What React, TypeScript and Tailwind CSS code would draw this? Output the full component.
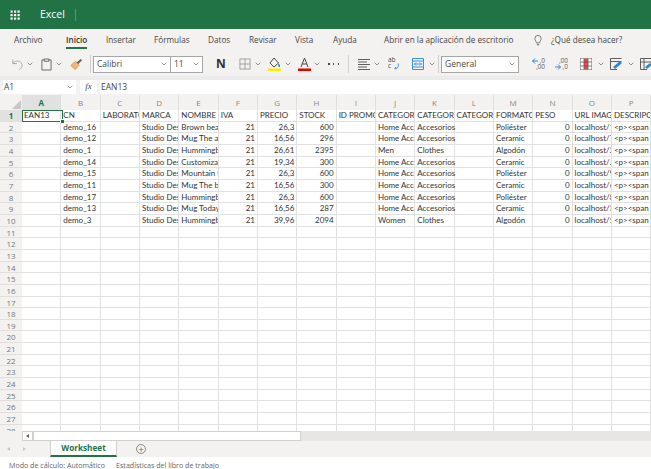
import React from "react";
import { ChevronDown } from "lucide-react";

const columns = ["A", "B", "C", "D", "E", "F", "G", "H", "I", "J", "K", "L", "M", "N", "O", "P"];

const header = ["EAN13", "CN", "LABORATORIO", "MARCA", "NOMBRE DEL", "IVA", "PRECIO", "STOCK", "ID PROMOCION", "CATEGORIA 1", "CATEGORIA 2", "CATEGORIA 3", "FORMATO", "PESO", "URL IMAGEN", "DESCRIPCION"];

type Item = { cn: string; name: string; price: string; stock: string; cat: string; sub: string; format: string; url: string };

const items: Item[] = [
  { cn: "demo_16", name: "Brown bear", price: "26,3", stock: "600", cat: "Home Accents", sub: "Accesorios", format: "Poliéster", url: "localhost/1" },
  { cn: "demo_12", name: "Mug The adventure", price: "16,56", stock: "296", cat: "Home Accents", sub: "Accesorios", format: "Ceramic", url: "localhost/7" },
  { cn: "demo_1", name: "Hummingbird", price: "26,61", stock: "2395", cat: "Men", sub: "Clothes", format: "Algodón", url: "localhost/2" },
  { cn: "demo_14", name: "Customizable", price: "19,34", stock: "300", cat: "Home Accents", sub: "Accesorios", format: "Ceramic", url: "localhost/." },
  { cn: "demo_15", name: "Mountain fox", price: "26,3", stock: "600", cat: "Home Accents", sub: "Accesorios", format: "Poliéster", url: "localhost/9" },
  { cn: "demo_11", name: "Mug The best", price: "16,56", stock: "300", cat: "Home Accents", sub: "Accesorios", format: "Ceramic", url: "localhost/6" },
  { cn: "demo_17", name: "Hummingbird", price: "26,3", stock: "600", cat: "Home Accents", sub: "Accesorios", format: "Poliéster", url: "localhost/8" },
  { cn: "demo_13", name: "Mug Today is", price: "16,56", stock: "287", cat: "Home Accents", sub: "Accesorios", format: "Ceramic", url: "localhost/3" },
  { cn: "demo_3", name: "Hummingbird", price: "39,96", stock: "2094", cat: "Women", sub: "Clothes", format: "Algodón", url: "localhost/5" },
];

const tabs = [
  { label: "Archivo", className: "ml-[14px] w-[28px]" },
  { label: "Inicio", className: "ml-[24px] w-[21px]", active: true },
  { label: "Insertar", className: "ml-[19px] w-[28px]" },
  { label: "Fórmulas", className: "ml-[20px] w-[35px]" },
  { label: "Datos", className: "ml-[19px] w-[22px]" },
  { label: "Revisar", className: "ml-[19px] w-[27px]" },
  { label: "Vista", className: "ml-[19px] w-[18px]" },
  { label: "Ayuda", className: "ml-[20px] w-[24px]" },
  { label: "Abrir en la aplicación de escritorio", className: "ml-[27px] w-[129px]" },
];

const Chevron = ({ className = "" }: { className?: string }) => (
  <ChevronDown className={`w-[8px] h-[8px] shrink-0 text-[#605e5c] ${className}`} strokeWidth={2} />
);

const Divider = ({ className = "" }: { className?: string }) => (
  <div className={`w-px h-[18px] bg-[#d2d0ce] shrink-0 ${className}`} />
);

const Cell = ({ children, right, spill }: { children?: React.ReactNode; right?: boolean; spill?: boolean }) => (
  <div
    className={`w-[39.33px] shrink-0 h-full border-r border-b border-[#e1e1e1] px-[2px] leading-[11.5px] whitespace-nowrap font-['Lato',sans-serif] text-[8px] text-[#333] ${
      right ? "text-right" : ""
    } ${spill ? "overflow-visible relative z-10" : "overflow-hidden"}`}
  >
    {children}
  </div>
);

const RowLabel = ({ n, active }: { n: number; active?: boolean }) => (
  <div
    className={`w-[22px] shrink-0 h-full text-center text-[8px] leading-[11px] border-b border-[#e1dfdd] ${
      active ? "bg-[#e1e1e1] text-[#217346] font-bold" : "bg-[#f3f2f1] text-[#777]"
    }`}
  >
    {n}
  </div>
);

export default function App() {
  return (
    <div className="w-[651px] h-[469px] overflow-hidden flex flex-col bg-white font-['Open_Sans',sans-serif]">
      {/* title bar */}
      <div className="h-[29px] shrink-0 bg-[#217346] flex items-center text-white">
        <svg viewBox="0 0 10 10" className="w-[10px] h-[10px] ml-[10px]" fill="white">
          {[0.5, 4, 7.5].map((y) =>
            [0.5, 4, 7.5].map((x) => <rect key={`${x}-${y}`} x={x} y={y} width="2.2" height="2.2" />)
          )}
        </svg>
        <span className="ml-[20px] text-[10.5px]">Excel</span>
        <div className="ml-[10px] w-px h-[12px] bg-[#4f9a70]" />
      </div>

      {/* ribbon tabs */}
      <div className="h-[23px] shrink-0 bg-[#f3f2f1] flex items-center text-[8.2px] text-[#484644] whitespace-nowrap">
        {tabs.map((tab) => (
          <div key={tab.label} className={`relative ${tab.className} ${tab.active ? "font-semibold text-[#323130]" : ""}`}>
            {tab.label}
            {tab.active && <div className="absolute left-0 right-0 top-[13px] h-[2px] bg-[#217346]" />}
          </div>
        ))}
        <svg viewBox="0 0 10 14" className="w-[8px] h-[11px] ml-[21px]" fill="none" stroke="#605e5c" strokeWidth="1">
          <path d="M3 10 C3 8 1 7 1 4.5 A4 4 0 0 1 9 4.5 C9 7 7 8 7 10 Z M3.5 12 H6.5 M4.5 13.5 H5.5" />
        </svg>
        <span className="ml-[9px]">¿Qué desea hacer?</span>
      </div>

      {/* toolbar */}
      <div className="h-[24px] shrink-0 bg-[#f3f2f1] flex items-center whitespace-nowrap [&>*]:shrink-0">
        <svg viewBox="0 0 14 14" className="w-[13px] h-[13px] ml-[11px]" fill="none" stroke="#a6a6a6" strokeWidth="1">
          <path d="M2 1.5 V6 H6.5 M2 6 C4 3 8 2.5 10.5 4.5 C13 7 12 11 9 12.5" />
        </svg>
        <Chevron className="ml-[2px]" />
        <svg viewBox="0 0 12 14" className="w-[11px] h-[13px] ml-[7px]" fill="none" stroke="#605e5c" strokeWidth="1">
          <path d="M3.5 2 H1 V13 H11 V2 H8.5 M3.5 1 H8.5 V3.5 H3.5 Z" />
        </svg>
        <Chevron className="ml-[3px]" />
        <svg viewBox="0 0 14 14" className="w-[13px] h-[13px] ml-[7px]">
          <path d="M1 8 L6 3.5 L10 7.5 L5.5 12.5 Z" fill="#f2b67d" stroke="#d9822b" strokeWidth="0.8" />
          <path d="M7 5 L11.5 1 L13 2.5 L9 6.5 Z" fill="#605e5c" />
        </svg>
        <Divider className="ml-[7px]" />
        <div className="ml-[2px] w-[110px] h-[17px] flex border border-[#a6a6a6] bg-white text-[8.5px] text-[#484644]">
          <div className="w-[77px] flex items-center justify-between pl-[3px] pr-[2px] border-r border-[#a6a6a6]">
            Calibri
            <Chevron />
          </div>
          <div className="flex-1 flex items-center justify-between pl-[3px] pr-[2px]">
            11
            <Chevron />
          </div>
        </div>
        <span className="ml-[13px] w-[10px] text-[12px] font-bold text-[#323130] leading-none">N</span>
        <svg viewBox="0 0 13 13" className="w-[12px] h-[12px] ml-[13px]" fill="none" stroke="#8a8886" strokeWidth="0.8">
          <path d="M1 1 H12 V12 H1 Z M6.5 1 V12 M1 6.5 H12" />
        </svg>
        <Chevron className="ml-[3px]" />
        <svg viewBox="0 0 13 14" className="w-[13px] h-[14px] ml-[6px]">
          <path d="M6 1 L10.5 6 L6 10 L2 6 Z" fill="none" stroke="#484644" strokeWidth="1" />
          <path d="M10 6 L12 8 V10 H10.5 Z" fill="#2b88d8" />
          <rect x="0" y="11.5" width="13" height="2.5" fill="#ffeb00" />
        </svg>
        <Chevron className="ml-[3px]" />
        <svg viewBox="0 0 13 14" className="w-[13px] h-[14px] ml-[6px]">
          <path d="M3 10 L6.5 1 L10 10 M4.2 7 H8.8" fill="none" stroke="#484644" strokeWidth="1" />
          <rect x="0" y="11.5" width="13" height="2.5" fill="#e60000" />
        </svg>
        <Chevron className="ml-[2px]" />
        <div className="ml-[7px] w-[11px] flex justify-between">
          <div className="w-[1.5px] h-[1.5px] bg-[#484644]" />
          <div className="w-[1.5px] h-[1.5px] bg-[#484644]" />
          <div className="w-[1.5px] h-[1.5px] bg-[#484644]" />
        </div>
        <Divider className="ml-[9px]" />
        <svg viewBox="0 0 12 12" className="w-[12px] h-[12px] ml-[9px]" fill="none" stroke="#605e5c" strokeWidth="1">
          <path d="M0 1.5 H12 M0 4 H9 M0 6.5 H12 M0 9 H9 M0 11.5 H12" />
        </svg>
        <Chevron className="ml-[3px]" />
        <div className="ml-[7px] w-[12px] h-[14px] relative text-[6.5px] leading-[5.5px] text-[#484644]">
          ab
          <br />c
          <svg viewBox="0 0 8 8" className="absolute right-0 bottom-[1px] w-[7px] h-[7px]" fill="none" stroke="#2b88d8" strokeWidth="1">
            <path d="M6 0.5 V4 C6 6 4 6 2 6 M3.5 4.5 L2 6 L3.5 7.5" />
          </svg>
        </div>
        <svg viewBox="0 0 12 12" className="w-[12px] h-[12px] ml-[12px]" fill="none" stroke="#2b88d8" strokeWidth="0.9">
          <path d="M0.5 0.5 H11.5 V11.5 H0.5 Z M0.5 3 H11.5 M0.5 9 H11.5 M2.5 6 H9.5 M4 4.5 L2.5 6 L4 7.5 M8 4.5 L9.5 6 L8 7.5" />
        </svg>
        <Chevron className="ml-[4px]" />
        <Divider className="ml-[2px]" />
        <div className="ml-[2px] w-[78px] h-[17px] flex items-center justify-between pl-[3px] pr-[2px] border border-[#a6a6a6] bg-white text-[8.5px] text-[#484644]">
          General
          <Chevron />
        </div>
        <div className="ml-[13px] w-[13px] h-[12px] relative text-[6.5px] leading-[6px] text-[#605e5c] text-right">
          ,0
          <br />
          ,00
          <svg viewBox="0 0 6 6" className="absolute left-0 top-0 w-[6px] h-[6px]" fill="none" stroke="#2b88d8" strokeWidth="1">
            <path d="M6 3 H0.5 M3 0.5 L0.5 3 L3 5.5" />
          </svg>
        </div>
        <div className="ml-[10px] w-[13px] h-[12px] relative text-[6.5px] leading-[6px] text-[#605e5c] text-right">
          ,00
          <br />
          ,0
          <svg viewBox="0 0 6 6" className="absolute left-0 bottom-0 w-[6px] h-[6px]" fill="none" stroke="#2b88d8" strokeWidth="1">
            <path d="M0 3 H5.5 M3 0.5 L5.5 3 L3 5.5" />
          </svg>
        </div>
        <svg viewBox="0 0 12 12" className="w-[12px] h-[12px] ml-[12px]">
          <rect width="12" height="12" fill="#fff" stroke="#605e5c" />
          <rect x="4" y="0.5" width="4" height="11" fill="#e8474c" />
          <path d="M0.5 4 H11.5 M0.5 8 H11.5 M4 0.5 V11.5 M8 0.5 V11.5" stroke="#605e5c" strokeWidth="0.8" />
        </svg>
        <Chevron className="ml-[5px]" />
        <svg viewBox="0 0 12 12" className="w-[12px] h-[12px] ml-[5px]" fill="none">
          <path d="M0.5 0.5 H11.5 M0.5 0.5 V11.5 H7 M0.5 3.5 H11.5" stroke="#605e5c" strokeWidth="1" />
          <path d="M3 9 L10 3 L12 5 L5 11 Z" fill="#2b88d8" />
        </svg>
        <Chevron className="ml-[5px]" />
        <svg viewBox="0 0 12 12" className="w-[12px] h-[12px] ml-[5px]" fill="none">
          <path d="M0.5 0.5 H11.5 M0.5 0.5 V11.5 H7 M0.5 4 H11.5 M4 0.5 V11.5" stroke="#605e5c" strokeWidth="1" />
          <path d="M5 9 L10 5 L12 7 L7 11 Z" fill="#2b88d8" />
        </svg>
      </div>

      <div className="h-[4px] shrink-0 bg-[#ebebeb]" />

      {/* formula bar */}
      <div className="h-[15px] shrink-0 bg-[#f3f2f1] flex items-stretch pb-px text-[8.5px] text-[#484644]">
        <div className="ml-[3px] w-[73px] bg-white flex items-center justify-between pl-px pr-[2px]">
          A1
          <Chevron />
        </div>
        <div className="ml-[4px] w-[17px] bg-white flex items-center justify-center font-['Liberation_Serif',serif] italic text-[9px]">
          fx
        </div>
        <div className="ml-[3px] flex-1 bg-white flex items-center pl-px">EAN13</div>
      </div>

      {/* sheet */}
      <div className="flex-1 min-h-0 overflow-hidden relative">
        <div className="h-[15px] flex">
          <div className="w-[22px] shrink-0 bg-[#f3f2f1] flex items-end justify-end pr-px pb-px">
            <svg viewBox="0 0 9 9" className="w-[9px] h-[9px]">
              <path d="M9 0 V9 H0 Z" fill="#c8c6c4" />
            </svg>
          </div>
          {columns.map((col, i) => (
            <div
              key={col}
              className={`w-[39.33px] shrink-0 text-center text-[8px] leading-[15px] border-r border-[#e1dfdd] ${
                i === 0 ? "bg-[#e1e1e1] text-[#217346] font-bold" : "bg-[#f3f2f1] text-[#888]"
              }`}
            >
              {col}
            </div>
          ))}
        </div>
        <div className="h-[11.67px] flex">
          <RowLabel n={1} active />
          {header.map((h, i) => (
            <Cell key={i}>{h}</Cell>
          ))}
        </div>
        {items.map((item, i) => (
          <div key={item.cn} className="h-[11.67px] flex">
            <RowLabel n={i + 2} />
            <Cell />
            <Cell>{item.cn}</Cell>
            <Cell />
            <Cell>Studio Design</Cell>
            <Cell>{item.name}</Cell>
            <Cell right>21</Cell>
            <Cell right>{item.price}</Cell>
            <Cell right>{item.stock}</Cell>
            <Cell />
            <Cell>{item.cat}</Cell>
            <Cell spill>{item.sub}</Cell>
            <Cell />
            <Cell>{item.format}</Cell>
            <Cell right>0</Cell>
            <Cell>{item.url}</Cell>
            <Cell>{"<p><span style"}</Cell>
          </div>
        ))}
        {Array.from({ length: 18 }, (_, i) => (
          <div key={i} className="h-[11.67px] flex">
            <RowLabel n={i + 11} />
            {columns.map((col) => (
              <Cell key={col} />
            ))}
          </div>
        ))}
        {/* selected cell */}
        <div className="absolute left-[21.5px] top-[15px] w-[41px] h-[12px] border-[1.5px] border-[#217346]">
          <div className="absolute -right-[2px] -bottom-[2px] w-[3px] h-[3px] bg-[#217346] border-l border-t border-white box-content" />
        </div>
      </div>

      {/* horizontal scrollbar */}
      <div className="h-[10px] shrink-0 flex bg-[#e6e6e6]">
        <div className="w-[22px] bg-[#f3f2f1]" />
        <div className="w-[11px] bg-white border border-[#d2d0ce] flex items-center justify-center">
          <div className="w-0 h-0 border-y-[2px] border-y-transparent border-r-[3px] border-r-[#605e5c]" />
        </div>
        <div className="w-[268px] bg-white border border-[#d2d0ce]" />
      </div>

      {/* sheet tabs */}
      <div className="h-[16px] shrink-0 bg-[#f3f2f1] flex items-center">
        <div className="ml-[7px] w-0 h-0 border-y-[2px] border-y-transparent border-r-[3px] border-r-[#c8c6c4]" />
        <div className="ml-[13px] w-0 h-0 border-y-[2px] border-y-transparent border-l-[3px] border-l-[#c8c6c4]" />
        <div className="ml-[24px] w-[67px] h-full bg-white border-x border-[#d2d0ce] border-b-2 border-b-[#217346] text-center text-[8.2px] leading-[13px] font-bold text-[#217346]">
          Worksheet
        </div>
        <div className="ml-[19px] w-[10px] h-[10px] rounded-full border border-[#8a8886] flex items-center justify-center text-[9px] leading-none text-[#605e5c]">
          +
        </div>
      </div>

      {/* status bar */}
      <div className="h-[12px] shrink-0 bg-white flex items-center pt-[5px] text-[7.1px] text-[#666] whitespace-nowrap">
        <span className="ml-[9px]">Modo de cálculo: Automático</span>
        <span className="ml-[11px]">Estadísticas del libro de trabajo</span>
      </div>
    </div>
  );
}
